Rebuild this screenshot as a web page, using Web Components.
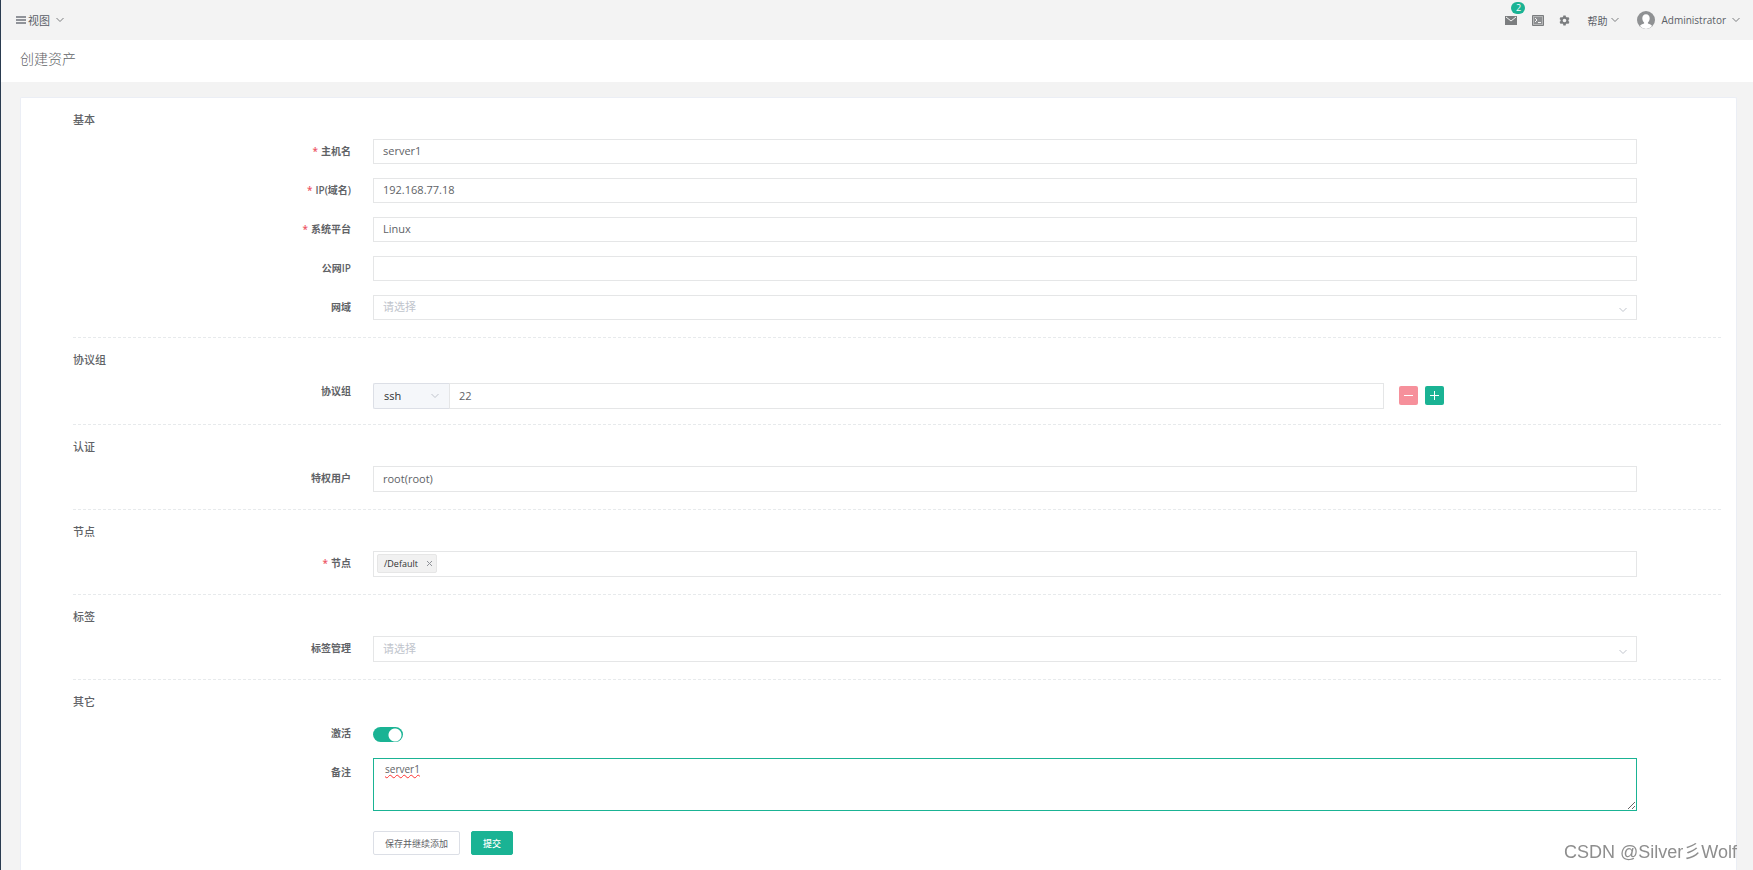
<!DOCTYPE html>
<html lang="zh-CN">
<head>
<meta charset="utf-8">
<title>创建资产</title>
<style>
  html, body {
    margin: 0;
    padding: 0;
  }

  body {
    --primary: #1ab394;
    --border: #e5e6e7;
    --text: #606266;
    min-height: 100vh;
    display: flex;
    font-family: "Open Sans", "Noto Sans CJK SC", sans-serif;
    font-size: 11px;
    color: var(--text);
    background: #f3f3f3;
  }

  asset-app {
    flex: 1;
  }
</style>
</head>
<body>
<asset-app></asset-app>

<script>
const appView = document.createElement("template");
appView.innerHTML = `
<style>
  :host {
    display: flex;
    flex-direction: column;
    border-left: 1px solid #2a3b50;
    min-width: 0;
  }

  .card {
    flex: 1;
    margin: 15px 16px 0 19px;
    padding: 0 15px 14px 52px;
    background: #fff;
    border: 1px solid #ebeef5;
    border-bottom: none;
    border-radius: 2px 2px 0 0;
  }
</style>
<top-bar></top-bar>
<page-title>创建资产</page-title>
<main class="card">
  <form-section heading="基本">
    <asset-field label="主机名" required value="server1"></asset-field>
    <asset-field label="IP(域名)" required value="192.168.77.18"></asset-field>
    <asset-field label="系统平台" required type="select"><option>Linux</option></asset-field>
    <asset-field label="公网IP"></asset-field>
    <asset-field label="网域" type="select" arrow><option>请选择</option></asset-field>
  </form-section>
  <form-section heading="协议组" class="short">
    <protocol-field label="协议组"></protocol-field>
  </form-section>
  <form-section heading="认证">
    <asset-field label="特权用户" type="select" class="tall"><option>root(root)</option></asset-field>
  </form-section>
  <form-section heading="节点">
    <asset-field label="节点" required type="tags" class="tall" value="/Default"></asset-field>
  </form-section>
  <form-section heading="标签">
    <asset-field label="标签管理" type="select" class="tall" arrow><option>请选择</option></asset-field>
  </form-section>
  <form-section heading="其它" class="last">
    <asset-field label="激活" type="switch"></asset-field>
    <asset-field label="备注" type="textarea" class="note" value="server1"></asset-field>
    <form-actions></form-actions>
  </form-section>
</main>
<water-mark>CSDN @Silver彡Wolf</water-mark>`

class AssetApp extends HTMLElement{
    constructor(){
        super();
        this.attachShadow({mode : 'open'})
        this.shadowRoot.appendChild(appView.content.cloneNode(true))
    }
}


const chevron = `<svg class="chevron" width="8" height="6" viewBox="0 0 8 6" fill="none" stroke="currentColor"><path d="M.5 1 4 4.5 7.5 1"/></svg>`

const topBar = document.createElement("template");
topBar.innerHTML = `
<style>
  :host {
    display: flex;
    justify-content: space-between;
    align-items: center;
    height: 40px;
    padding: 0 13px 0 15px;
    background: #f3f3f3;
  }

  nav {
    display: flex;
    align-items: center;
  }

  button {
    display: flex;
    align-items: center;
    padding: 0;
    border: none;
    background: none;
    font: inherit;
    font-size: 10px;
    color: #5a5e66;
    cursor: pointer;
  }

  svg {
    display: block;
    color: #7b7d7f;
  }

  .view { font-size: 11px; gap: 2px; }
  .view .chevron { margin-left: 4px; }
  .mail { position: relative; margin-right: 15px; }
  .terminal { margin-right: 15px; }
  .setting { margin-right: 17px; }
  .help { gap: 4px; margin-right: 18px; }
  .user { gap: 6px; }

  .badge {
    position: absolute;
    left: 6px;
    top: -14px;
    width: 14px;
    height: 12px;
    border-radius: 6px;
    background: var(--primary);
    color: #fff;
    font-size: 9px;
    line-height: 12px;
    text-align: center;
  }
</style>
<nav>
  <button class="view">
    <svg width="10" height="9" viewBox="0 0 10 9" fill="#909399"><path d="M0 0h10v2H0zM0 3h10v2H0zM0 6h10v2H0z"/></svg>
    <span>视图</span>${chevron}
  </button>
</nav>
<nav>
  <button class="mail" aria-label="站内信">
    <svg width="12" height="9" viewBox="0 0 12 9"><path fill="currentColor" d="M0 0h12v9H0z"/><path fill="none" stroke="#f3f3f3" d="m1 1 5 4 5-4"/></svg>
    <span class="badge">2</span>
  </button>
  <button class="terminal" aria-label="终端">
    <svg width="12" height="11" viewBox="0 0 12 11" fill="none"><path fill="#b4b5b6" stroke="currentColor" d="M.5.5h11v10H.5z"/><path fill="#8d8f91" d="M2 2h8v7H2z"/><path stroke="#f3f3f3" d="m3 3 2 2-2 2M6 7.500h3"/></svg>
  </button>
  <button class="setting" aria-label="设置">
    <svg width="11" height="11" viewBox="0 0 24 24" fill="currentColor"><path fill-rule="evenodd" d="M9.500 1h5l.6 3 2.300 1.300 2.900-1 2.500 4.300L20.500 11v2l2.300 2.100-2.500 4.300-2.900-1-2.300 1.300-.6 3.300h-5l-.6-3.300-2.300-1.300-2.900 1-2.500-4.300L3.500 13v-2L1.200 8.600l2.500-4.300 2.900 1L8.900 4zM12 8a4 4 0 1 0 0 8 4 4 0 0 0 0-8z"/></svg>
  </button>
  <button class="help"><span>帮助</span>${chevron}</button>
  <button class="user">
    <svg width="18" height="18" viewBox="0 0 18 18">
      <circle cx="9" cy="9" r="9" fill="#8f9193"/>
      <path fill="#fff" d="M9 3.200c2.400 0 3.700 1.700 3.700 4 0 1.800-.8 3.400-1.800 4.200v1.200c2 .6 3.400 1.400 4.300 2.500A9 9 0 0 1 9 18a9 9 0 0 1-6.200-2.900c.9-1.100 2.300-1.900 4.300-2.500v-1.200c-1-.8-1.800-2.400-1.800-4.200 0-2.300 1.300-4 3.700-4z"/>
    </svg>
    <span>Administrator</span>${chevron}
  </button>
</nav>`

class TopBar extends HTMLElement{
    constructor(){
        super();
        this.attachShadow({mode : 'open'})
        this.shadowRoot.appendChild(topBar.content.cloneNode(true))
    }
}


class PageTitle extends HTMLElement{
    constructor(){
        super();
        this.attachShadow({mode : 'open'})
        this.shadowRoot.innerHTML = `
        <style>
          :host { display: block; background: #fff; }
          h1 {
            margin: 0;
            padding: 9px 19px 13px;
            font-size: 14px;
            font-weight: 300;
            line-height: 20px;
          }
        </style>
        <h1><slot></slot></h1>`
    }
}


class FormSection extends HTMLElement{
    constructor(){
        super();
        this.attachShadow({mode : 'open'})
        this.shadowRoot.innerHTML = `
        <style>
          :host {
            display: block;
            padding: 12px 0 17px;
            border-bottom: 1px dashed #e7eaec;
          }
          :host(.short) { padding-bottom: 15px; }
          :host(.last) { border-bottom: none; padding-bottom: 0; }
          h3 {
            margin: 0 0 9px;
            font-size: 11px;
            font-weight: 500;
            line-height: 20px;
          }
          .rows { display: flex; flex-direction: column; gap: 14px; }
          :host(.last) .rows { gap: 12px; }
        </style>
        <h3></h3>
        <div class="rows"><slot></slot></div>`
    }

    connectedCallback(){
        this.shadowRoot.querySelector("h3").textContent = this.getAttribute("heading")
    }
}


// label / control / empty column, shared by every row of the form
const rowStyle = `
  :host {
    display: grid;
    grid-template-columns: 75fr 316fr 21fr;
    --row: 25px;
  }
  :host(.tall) { --row: 26px; }
  :host(.note) { margin-top: 1px; }
  label.name {
    padding-right: 22px;
    text-align: right;
    font-size: 10px;
    font-weight: 600;
    line-height: 24px;
  }
  :host(.note) label.name { line-height: 28px; }
  label.required::before {
    content: "*";
    margin-right: 3px;
    color: #ed5565;
  }
  input, select, textarea {
    box-sizing: border-box;
    width: 100%;
    height: var(--row);
    margin: 0;
    padding: 0 9px 2px;
    border: 1px solid var(--border);
    border-radius: 0;
    outline: none;
    background: #fff;
    font: inherit;
    color: inherit;
    appearance: none;
  }
  .select { position: relative; }
  .select .chevron {
    position: absolute;
    right: 10px;
    bottom: 7px;
    color: #c0c4cc;
    pointer-events: none;
  }
  .arrow select { color: #c0c4cc; }
`

class AssetField extends HTMLElement{
    constructor(){
        super();
        this.attachShadow({mode : 'open'})
    }

    connectedCallback(){
        let type = this.getAttribute("type") || "text";
        let value = this.getAttribute("value") || "";
        let required = this.hasAttribute("required") ? "required" : "";
        this.shadowRoot.innerHTML = `
        <style>${rowStyle}
          .switch {
            display: block;
            width: 30px;
            height: 15px;
            margin-top: 6px;
            padding: 0;
            border: none;
            border-radius: 8px;
            background: radial-gradient(circle at 22px 8px, #fff 6px, var(--primary) 7px);
          }
          textarea {
            display: block;
            height: 53px;
            padding: 3px 11px;
            border-color: var(--primary);
            font-size: 10px;
            line-height: 15px;
            text-decoration: underline wavy #f33 1px;
            resize: vertical;
          }
          .tags {
            display: flex;
            align-items: flex-start;
            gap: 4px;
            box-sizing: border-box;
            height: var(--row);
            padding: 2px 3px;
            border: 1px solid var(--border);
          }
          .tag {
            display: flex;
            align-items: center;
            gap: 9px;
            box-sizing: border-box;
            height: 19px;
            padding: 0 4px 1px 6px;
            border: 1px solid #e6e6e6;
            border-radius: 2px;
            background: #f1f1f1;
            font-size: 9px;
            color: #303133;
          }
          .tag button {
            display: flex;
            padding: 0;
            border: none;
            background: none;
            color: #909399;
          }
          .tags input { flex: 1; width: auto; height: 20px; border: none; }
        </style>
        <label class="name ${required}" for="control">${this.getAttribute("label")}</label>
        ${this.control(type, value)}`

        if(type == "select"){
            this.shadowRoot.querySelector("select").append(...this.querySelectorAll("option"))
        }
    }

    control(type, value){
        if(type == "select"){
            let arrow = this.hasAttribute("arrow");
            return `<div class="select ${arrow ? "arrow" : ""}"><select id="control"></select>${arrow ? chevron : ""}</div>`
        }
        if(type == "tags"){
            return `<div class="tags"><span class="tag">${value}<button aria-label="移除"><svg width="5" height="5" viewBox="0 0 5 5" stroke="currentColor"><path d="m0 0 5 5M5 0 0 5"/></svg></button></span><input id="control"></div>`
        }
        if(type == "switch"){
            return `<div><input id="control" class="switch" type="checkbox" role="switch" checked></div>`
        }
        if(type == "textarea"){
            return `<textarea id="control" spellcheck="false">${value}</textarea>`
        }
        return `<input id="control" type="text" value="${value}">`
    }
}


class ProtocolField extends HTMLElement{
    constructor(){
        super();
        this.attachShadow({mode : 'open'})
    }

    connectedCallback(){
        this.shadowRoot.innerHTML = `
        <style>${rowStyle}
          .line {
            display: flex;
            align-items: flex-start;
            margin-top: 4px;
          }
          .group { flex: 0 0 80%; display: flex; margin-right: 15px; }
          .select { flex: 0 0 76px; }
          .select select {
            height: 26px;
            border-color: #dcdfe6;
            border-right: none;
            border-radius: 2px 0 0 2px;
            background: #f5f7fa;
            color: #303133;
            padding-left: 10px;
          }
          .select .chevron { bottom: 10px; }
          input { height: 26px; }
          button {
            display: flex;
            justify-content: center;
            align-items: center;
            width: 19px;
            height: 19px;
            margin: 3px 7px 0 0;
            padding: 0;
            border: none;
            border-radius: 2px;
            background: var(--primary);
            color: #fff;
          }
          .remove { background: #f6909b; }
        </style>
        <label class="name" for="port">${this.getAttribute("label")}</label>
        <div class="line">
          <div class="group">
            <div class="select"><select aria-label="协议"><option>ssh</option></select>${chevron}</div>
            <input id="port" type="text" value="22">
          </div>
          <button class="remove" aria-label="删除"><svg width="9" height="9" viewBox="0 0 9 9" stroke="currentColor"><path d="M0 4.500h9"/></svg></button>
          <button aria-label="添加"><svg width="9" height="9" viewBox="0 0 9 9" stroke="currentColor"><path d="M0 4.500h9M4.500 0v9"/></svg></button>
        </div>`
    }
}


class FormActions extends HTMLElement{
    constructor(){
        super();
        this.attachShadow({mode : 'open'})
        this.shadowRoot.innerHTML = `
        <style>${rowStyle}
          .buttons {
            grid-column: 2;
            display: flex;
            gap: 11px;
            margin-top: 8px;
          }
          button {
            height: 24px;
            padding: 0 11px;
            border: 1px solid #dcdfe6;
            border-radius: 2px;
            background: #fff;
            font: inherit;
            font-size: 9px;
            color: #606266;
          }
          .primary {
            border-color: var(--primary);
            background: var(--primary);
            color: #fff;
            font-weight: 500;
          }
        </style>
        <div class="buttons">
          <button>保存并继续添加</button>
          <button class="primary">提交</button>
        </div>`
    }
}


class WaterMark extends HTMLElement{
    constructor(){
        super();
        this.attachShadow({mode : 'open'})
        this.shadowRoot.innerHTML = `
        <style>
          :host {
            position: fixed;
            right: 16px;
            bottom: 6px;
            font-family: "Liberation Sans", "Noto Sans CJK SC", sans-serif;
            font-size: 18px;
            line-height: 24px;
            color: #8e8e8e;
            text-shadow: -1px -1px #fff;
            pointer-events: none;
          }
        </style>
        <slot></slot>`
    }
}

customElements.define("top-bar", TopBar);
customElements.define("page-title", PageTitle);
customElements.define("form-section", FormSection);
customElements.define("asset-field", AssetField);
customElements.define("protocol-field", ProtocolField);
customElements.define("form-actions", FormActions);
customElements.define("water-mark", WaterMark);
customElements.define("asset-app", AssetApp);
</script>
</body>
</html>
